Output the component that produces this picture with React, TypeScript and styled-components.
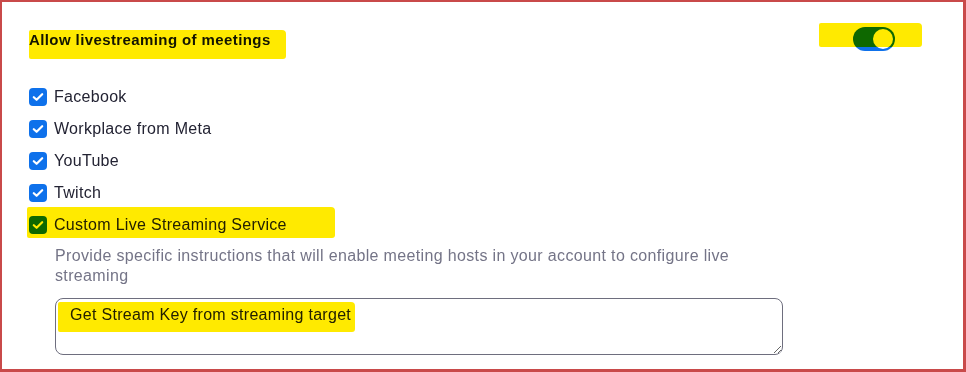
import styled, { createGlobalStyle } from 'styled-components';

const GlobalStyle = createGlobalStyle`
  body {
    margin: 0;
    background: #ffffff;
    font-family: "Liberation Sans", Arial, sans-serif;
    color: #232333;
  }
`;

const Frame = styled.div`
  box-sizing: border-box;
  width: 966px;
  height: 372px;
  border-style: solid;
  border-color: #c94a4a;
  border-width: 2px 3px 3px 2px;
  padding: 25px 68px 0 27px;
  background: #ffffff;
`;

const Header = styled.div`
  display: flex;
  align-items: center;
  justify-content: space-between;
  height: 24px;
`;

const Title = styled.span`
  font-size: 15px;
  font-weight: 700;
  letter-spacing: 0.4px;
  color: #131619;
`;

// marker stroke laid over content, blended like a real highlighter
const Mark = styled.span<{ $t: number; $r: number; $b: number; $l: number }>`
  position: relative;
  display: inline-flex;
  align-items: center;

  &::after {
    content: '';
    position: absolute;
    top: ${(p) => p.$t}px;
    right: ${(p) => p.$r}px;
    bottom: ${(p) => p.$b}px;
    left: ${(p) => p.$l}px;
    background: #ffea00;
    mix-blend-mode: multiply;
    border-radius: 2px 4px 3px 2px;
    pointer-events: none;
  }
`;

const Toggle = styled.span`
  position: relative;
  display: block;
  width: 42px;
  height: 24px;
  border-radius: 12px;
  background: #0e71eb;
`;

const Knob = styled.span`
  position: absolute;
  top: 2px;
  right: 2px;
  width: 20px;
  height: 20px;
  border-radius: 50%;
  background: #ffffff;
`;

const List = styled.div`
  display: flex;
  flex-direction: column;
  margin-top: 30px;
`;

const Row = styled.label`
  display: flex;
  align-items: center;
  gap: 7px;
  height: 32px;
  font-size: 16px;
  letter-spacing: 0.3px;
  color: #232333;
`;

const Box = styled.span`
  display: flex;
  align-items: center;
  justify-content: center;
  width: 18px;
  height: 18px;
  border-radius: 4px;
  background: #0e71eb;
  flex-shrink: 0;
`;

const Details = styled.div`
  padding-left: 26px;
  width: 728px;
`;

const Hint = styled.p`
  margin: 5px 0 0;
  font-size: 16px;
  letter-spacing: 0.35px;
  line-height: 20px;
  color: #747487;
`;

const FieldWrap = styled.div`
  position: relative;
  margin-top: 12px;
  width: 728px;
  height: 57px;
`;

const Field = styled.textarea`
  box-sizing: border-box;
  display: block;
  width: 728px;
  height: 57px;
  margin: 0;
  padding: 6px 14px;
  border: 1px solid #6e6e7e;
  border-radius: 8px;
  font-family: "Liberation Sans", Arial, sans-serif;
  font-size: 16px;
  letter-spacing: 0.3px;
  line-height: 20px;
  color: #232333;
  resize: vertical;
  outline: none;
`;

const FieldMark = styled.span`
  position: absolute;
  top: 4px;
  left: 3px;
  width: 297px;
  height: 30px;
  background: #ffea00;
  mix-blend-mode: multiply;
  border-radius: 2px 4px 3px 2px;
  pointer-events: none;
`;

const Check = () => (
  <Box>
    <svg width="12" height="10" viewBox="0 0 12 10" fill="none">
      <path d="M1.8 5.2 4.6 7.8 10.2 2.2" stroke="#ffffff" strokeWidth="2.2" strokeLinecap="round" strokeLinejoin="round" />
    </svg>
  </Box>
);

const services = ['Facebook', 'Workplace from Meta', 'YouTube', 'Twitch'];

export default function App() {
  return (
    <>
      <GlobalStyle />
      <Frame>
        <Header>
          <Mark $t={-1} $r={-15} $b={-11} $l={0}>
            <Title>Allow livestreaming of meetings</Title>
          </Mark>
          <Mark $t={-4} $r={-27} $b={4} $l={-34}>
            <Toggle>
              <Knob />
            </Toggle>
          </Mark>
        </Header>
        <List>
          {services.map((s) => (
            <Row key={s}>
              <Check />
              {s}
            </Row>
          ))}
          <div>
            <Mark $t={-2} $r={-48} $b={3} $l={-2}>
              <Row>
                <Check />
                Custom Live Streaming Service
              </Row>
            </Mark>
          </div>
          <Details>
            <Hint>
              Provide specific instructions that will enable meeting hosts in your account to configure live streaming
            </Hint>
            <FieldWrap>
              <Field defaultValue="Get Stream Key from streaming target" />
              <FieldMark />
            </FieldWrap>
          </Details>
        </List>
      </Frame>
    </>
  );
}
